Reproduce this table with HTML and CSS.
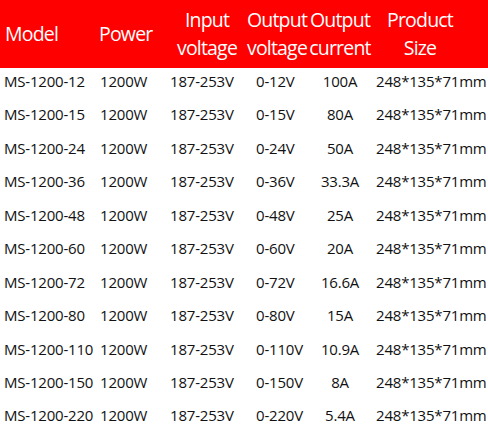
FILE: index.html
```html
<!DOCTYPE html>
<html>
<head>
<meta charset="utf-8">
<link rel="stylesheet" href="styles.css">
</head>
<body>
<div class="table">
  <div class="head">
    <div class="hc h-model">Model</div>
    <div class="hc h-power">Power</div>
    <div class="hc h-center">Input<br>voltage</div>
    <div class="hc h-center">Output<br>voltage</div>
    <div class="hc h-center">Output<br>current</div>
    <div class="hc h-center">Product<br>Size</div>
  </div>
  <div class="row"><span class="c1">MS-1200-12</span><span class="c2">1200W</span><span class="c3">187-253V</span><span class="c4">0-12V</span><span class="c5">100A</span><span class="c6">248*135*71mm</span></div>
  <div class="row"><span class="c1">MS-1200-15</span><span class="c2">1200W</span><span class="c3">187-253V</span><span class="c4">0-15V</span><span class="c5">80A</span><span class="c6">248*135*71mm</span></div>
  <div class="row"><span class="c1">MS-1200-24</span><span class="c2">1200W</span><span class="c3">187-253V</span><span class="c4">0-24V</span><span class="c5">50A</span><span class="c6">248*135*71mm</span></div>
  <div class="row"><span class="c1">MS-1200-36</span><span class="c2">1200W</span><span class="c3">187-253V</span><span class="c4">0-36V</span><span class="c5">33.3A</span><span class="c6">248*135*71mm</span></div>
  <div class="row"><span class="c1">MS-1200-48</span><span class="c2">1200W</span><span class="c3">187-253V</span><span class="c4">0-48V</span><span class="c5">25A</span><span class="c6">248*135*71mm</span></div>
  <div class="row"><span class="c1">MS-1200-60</span><span class="c2">1200W</span><span class="c3">187-253V</span><span class="c4">0-60V</span><span class="c5">20A</span><span class="c6">248*135*71mm</span></div>
  <div class="row"><span class="c1">MS-1200-72</span><span class="c2">1200W</span><span class="c3">187-253V</span><span class="c4">0-72V</span><span class="c5">16.6A</span><span class="c6">248*135*71mm</span></div>
  <div class="row"><span class="c1">MS-1200-80</span><span class="c2">1200W</span><span class="c3">187-253V</span><span class="c4">0-80V</span><span class="c5">15A</span><span class="c6">248*135*71mm</span></div>
  <div class="row"><span class="c1">MS-1200-110</span><span class="c2">1200W</span><span class="c3">187-253V</span><span class="c4">0-110V</span><span class="c5">10.9A</span><span class="c6">248*135*71mm</span></div>
  <div class="row"><span class="c1">MS-1200-150</span><span class="c2">1200W</span><span class="c3">187-253V</span><span class="c4">0-150V</span><span class="c5">8A</span><span class="c6">248*135*71mm</span></div>
  <div class="row"><span class="c1">MS-1200-220</span><span class="c2">1200W</span><span class="c3">187-253V</span><span class="c4">0-220V</span><span class="c5">5.4A</span><span class="c6">248*135*71mm</span></div>
</div>
</body>
</html>
```
FILE: styles.css
```css
html, body {
  margin: 0;
  padding: 0;
  background: #ffffff;
  overflow: hidden;
}
.table {
  width: 488px;
  font-family: "Open Sans", "DejaVu Sans", sans-serif;
}
.head, .row {
  display: grid;
  grid-template-columns: 98px 68px 82px 58px 68px 92px 22px;
}
.head {
  height: 68px;
  background: #fe0000;
  color: #ffffff;
  font-size: 19.5px;
  line-height: 28px;
  align-items: center;
  letter-spacing: -0.8px;
}
.hc {
  white-space: nowrap;
}
.h-model {
  padding-left: 5px;
}
.h-power {
  padding-left: 1px;
}
.h-center {
  text-align: center;
  display: flex;
  flex-direction: column;
  align-items: center;
}
.row {
  height: 33.45px;
  line-height: 27.45px;
  padding-bottom: 6px;
  box-sizing: border-box;
  font-size: 15px;
  font-weight: 500;
  color: #111111;
  white-space: nowrap;
  letter-spacing: -0.2px;
}
.c1 { padding-left: 4px; }
.c2 { padding-left: 2px; }
.c3 { padding-left: 4px; }
.c4 { padding-left: 8px; }
.c5 { text-align: center; }
.c6 { padding-left: 2px; }
```
